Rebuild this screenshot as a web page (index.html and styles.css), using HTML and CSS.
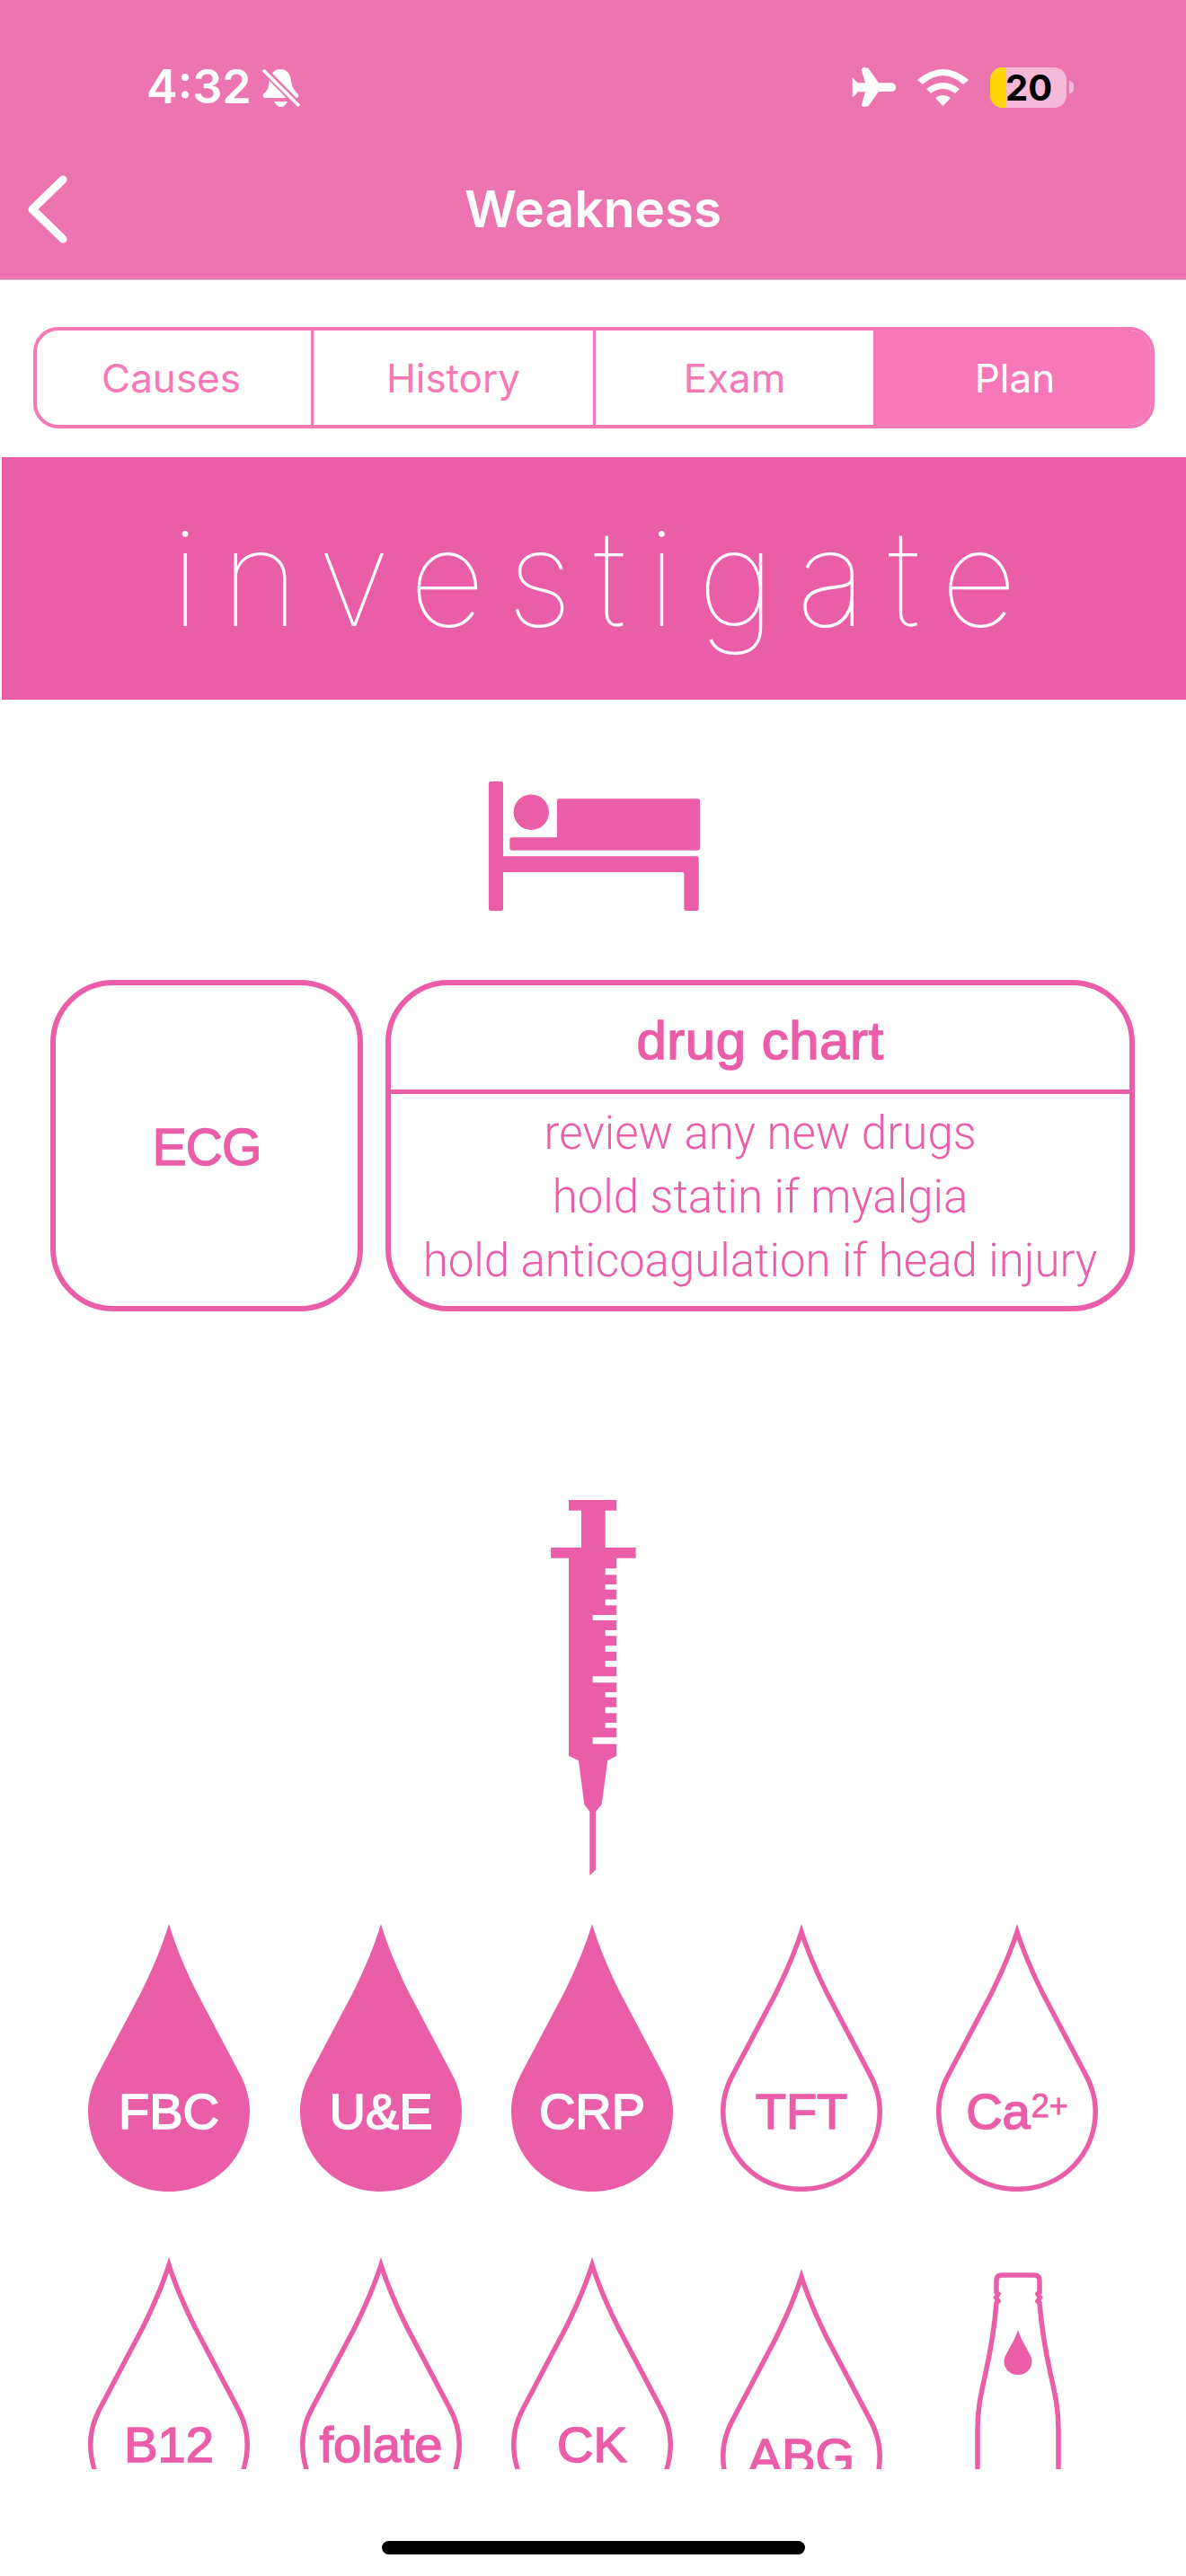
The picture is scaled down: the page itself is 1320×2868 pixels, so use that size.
FILE: index.html
```html
<!DOCTYPE html>
<html lang="en">

<head>
    <meta charset="UTF-8">
    <meta name="viewport" content="width=device-width, initial-scale=1.0">
    <title>Weakness</title>
    <link rel="stylesheet" href="styles.css">
</head>

<body>
    <svg class="defs" aria-hidden="true">
        <defs>
            <path id="dropShape" d="M90 0C82 26 72 50 58 78L11 167C5 178 0 193 0 208C0 258 38 298 90 298C142 298 180 258 180 208C180 193 175 178 169 167L122 78C108 50 98 26 90 0Z"/>
            <clipPath id="dropClip"><use href="#dropShape"/></clipPath>
        </defs>
    </svg>

    <header class="topbar">
        <div class="status">
            <div class="status-left">
                <span class="time">4:32</span>
                <svg class="bell" viewBox="0 0 42 43">
                    <path d="M20 1C27 1 31 6 32 14C33 22 36 25 40 29Q41 33 38 33H3Q0 33 1 29C5 25 7 23 7 17C8 7 13 1 20 1Z"/>
                    <path d="M13 37H28Q25 43 20.500 43Q16 43 13 37Z"/>
                    <line class="bell-gap" x1="1" y1="1" x2="41" y2="42"/>
                    <line class="bell-slash" x1="1" y1="2" x2="41" y2="42"/>
                </svg>
            </div>
            <div class="status-right">
                <svg class="plane" viewBox="0 0 49 44">
                    <path d="M.7 11.300L5 15.700L6.700 17.300H15L10.700 2.300L12.700 0L18.300 .7L30 17.300H43.300Q49 17.300 49 22Q49 27 43.300 27H30L18.300 43.300L12.700 44L10.700 42.300L15 27.300H6.700L4 30.700L.7 33.300Z"/>
                </svg>
                <svg class="wifi" viewBox="0 0 57 41">
                    <path d="M0 12Q28.500 -12 57 12L51 17Q28.500 -3 6 17Z"/>
                    <path d="M10 22Q28.500 8 47 22L42 27Q28.500 17 15 27Z"/>
                    <path d="M20 32Q28.500 26 37 32L28.500 41Z"/>
                </svg>
                <div class="battery">
                    <div class="battery-body"><span class="battery-low"></span><span class="battery-num">20</span></div>
                    <span class="battery-nub"></span>
                </div>
            </div>
        </div>
        <div class="nav">
            <svg class="back" viewBox="0 0 44 76">
                <polyline points="39,5 5,38 39,71"/>
            </svg>
            <h1 class="nav-title">Weakness</h1>
        </div>
    </header>

    <nav class="tabs">
        <div class="tab tab-first">Causes</div>
        <div class="tab">History</div>
        <div class="tab tab-third">Exam</div>
        <div class="tab tab-on">Plan</div>
    </nav>

    <div class="banner">investigate</div>

    <svg class="bed" viewBox="0 0 235 144">
        <rect x="0" y="0" width="16" height="144" rx="2.500"/>
        <path d="M16 83.300H231.500Q233.700 83.300 233.700 85.500V141.500Q233.700 144 231.500 144H219.500Q217.300 144 217.300 141.500V103Q217.300 101 215.300 101H16Z"/>
        <path d="M78 19.300H232.500Q235 19.300 235 22V74Q235 76.700 232.500 76.700H26Q23.300 76.700 23.300 74V65Q23.300 62.300 26 62.300H76V21.300Q76 19.300 78 19.300Z"/>
        <circle cx="47.300" cy="34.300" r="19.700"/>
    </svg>

    <section class="cards">
        <div class="card card-ecg">ECG</div>
        <div class="card card-drug">
            <div class="card-head">drug chart</div>
            <div class="card-body">
                <p>review any new drugs</p>
                <p>hold statin if myalgia</p>
                <p>hold anticoagulation if head injury</p>
            </div>
        </div>
    </section>

    <svg class="syringe" viewBox="0 0 94.700 418">
        <path d="M20 0H73.300V11.700H60.700V53H94.700V64.700H73.300V285L63.300 290L56.700 339L50 347V411.700L43.300 418V347L37.300 339L31 290L20 285V64.700H0V53H34V11.700H20Z"/>
        <g class="ticks">
            <rect x="60.700" y="76.300" width="13" height="7"/>
            <rect x="60.700" y="94" width="13" height="5.700"/>
            <rect x="60.700" y="110.700" width="13" height="6.600"/>
            <rect x="46.700" y="128" width="27" height="6"/>
            <rect x="60.700" y="145" width="13" height="6.300"/>
            <rect x="60.700" y="162.300" width="13" height="6.700"/>
            <rect x="60.700" y="179" width="13" height="6.700"/>
            <rect x="46.700" y="196.300" width="27" height="7"/>
            <rect x="60.700" y="214" width="13" height="5.700"/>
            <rect x="60.700" y="230.700" width="13" height="6.600"/>
            <rect x="60.700" y="248" width="13" height="5.700"/>
            <rect x="46.700" y="264.300" width="27" height="7.400"/>
        </g>
    </svg>

    <section class="bloods">
        <div class="drop drop-on">
            <svg viewBox="0 0 180 298"><use href="#dropShape"/></svg>
            <span class="drop-label">FBC</span>
        </div>
        <div class="drop drop-on">
            <svg viewBox="0 0 180 298"><use href="#dropShape"/></svg>
            <span class="drop-label">U&amp;E</span>
        </div>
        <div class="drop drop-on">
            <svg viewBox="0 0 180 298"><use href="#dropShape"/></svg>
            <span class="drop-label">CRP</span>
        </div>
        <div class="drop">
            <svg viewBox="0 0 180 298"><use href="#dropShape" clip-path="url(#dropClip)"/></svg>
            <span class="drop-label">TFT</span>
        </div>
        <div class="drop">
            <svg viewBox="0 0 180 298"><use href="#dropShape" clip-path="url(#dropClip)"/></svg>
            <span class="drop-label">Ca<sup>2+</sup></span>
        </div>
        <div class="drop">
            <svg viewBox="0 0 180 298"><use href="#dropShape" clip-path="url(#dropClip)"/></svg>
            <span class="drop-label">B12</span>
        </div>
        <div class="drop">
            <svg viewBox="0 0 180 298"><use href="#dropShape" clip-path="url(#dropClip)"/></svg>
            <span class="drop-label">folate</span>
        </div>
        <div class="drop">
            <svg viewBox="0 0 180 298"><use href="#dropShape" clip-path="url(#dropClip)"/></svg>
            <span class="drop-label">CK</span>
        </div>
        <div class="drop drop-low">
            <svg viewBox="0 0 180 298"><use href="#dropShape" clip-path="url(#dropClip)"/></svg>
            <span class="drop-label">ABG</span>
        </div>
        <svg class="bottle" viewBox="0 0 96 240">
            <path class="bottle-line" d="M3 240V175C3 150 7 135 12 112C19 80 22 60 24 34L26 32L23.500 28L26 24L24 22V9Q24 3 30 3H66Q72 3 72 9V22L70 24L72.500 28L70 32L72 34C74 60 77 80 84 112C89 135 93 150 93 175V240"/>
            <use href="#dropShape" transform="translate(32.500 64) scale(.172 .168)"/>
        </svg>
    </section>

    <div class="home-bar"></div>
</body>

</html>
```

FILE: styles.css
```css
* {
    box-sizing: border-box;
}

html,
body {
    margin: 0;
    padding: 0;
}

body {
    position: relative;
    width: 1320px;
    height: 2868px;
    overflow: hidden;
    background: #fff;
    font-family: "Liberation Sans", Arial, sans-serif;
}

.defs {
    position: absolute;
    width: 0;
    height: 0;
}

/* top bar */
.topbar {
    display: flex;
    flex-direction: column;
    height: 312px;
    padding-top: 74px;
    background: #ec74af;
    border-bottom: 1px solid #d9c3cf;
    color: #fff;
    font-family: Inter, sans-serif;
}

.status {
    display: flex;
    justify-content: space-between;
    align-items: center;
    height: 46px;
    padding: 0 125px 0 163px;
}

.status-left,
.status-right {
    display: flex;
    align-items: center;
}

.status-left {
    gap: 12px;
}

.status-right {
    gap: 24px;
}

.time {
    font-size: 52px;
    font-weight: 600;
    line-height: 46px;
}

.bell {
    width: 42px;
    height: 43px;
    fill: #fff;
}

.bell-gap {
    stroke: #ec74af;
    stroke-width: 8;
}

.bell-slash {
    stroke: #fff;
    stroke-width: 3.500;
}

.plane {
    width: 49px;
    height: 44px;
    fill: #fff;
}

.wifi {
    width: 57px;
    height: 41px;
    fill: #fff;
}

.battery {
    display: flex;
    align-items: center;
    gap: 3px;
}

.battery-body {
    display: flex;
    width: 85px;
    height: 45px;
    border-radius: 14px;
    background: #f5b9d7;
}

.battery-low {
    width: 17px;
    border-radius: 14px 0 0 14px;
    background: #ffd60a;
}

.battery-num {
    font-size: 40px;
    font-weight: 700;
    line-height: 45px;
    color: #000;
}

.battery-nub {
    width: 5px;
    height: 14px;
    border-radius: 0 5px 5px 0;
    background: #f5b9d7;
}

.nav {
    display: flex;
    align-items: center;
    height: 80px;
    margin-top: 73px;
    padding-left: 31px;
}

.back {
    width: 44px;
    height: 76px;
    fill: none;
    stroke: #fff;
    stroke-width: 9;
    stroke-linecap: round;
    stroke-linejoin: round;
}

.nav-title {
    margin: 0 auto;
    padding-right: 75px;
    font-size: 57px;
    font-weight: 600;
    line-height: 80px;
}

/* tabs */
.tabs {
    display: grid;
    grid-template-columns: 308px 314px 309px 1fr;
    width: 1248px;
    height: 113px;
    margin: 52px 0 0 37px;
    border: 4px solid #f678b6;
    border-radius: 28px;
    overflow: hidden;
    color: #f678b6;
    font-family: Inter, sans-serif;
    font-size: 44px;
}

.tab {
    display: flex;
    justify-content: center;
    align-items: center;
    border-right: 3px solid #f678b6;
}

.tab-first {
    padding-right: 6px;
}

.tab-third {
    border-right: 0;
}

.tab-on {
    padding-left: 6px;
    border-right: 0;
    background: #f678b6;
    color: #fff;
}

/* investigate banner */
.banner {
    display: flex;
    justify-content: center;
    align-items: center;
    height: 270px;
    margin: 32px 0 0 2px;
    padding: 0 0 2px 24px;
    background: #ea5ea8;
    color: #fff;
    font-family: Inter, sans-serif;
    font-size: 148px;
    font-weight: 100;
    letter-spacing: 24px;
}

.bed {
    display: block;
    width: 235px;
    height: 144px;
    margin: 91px 0 0 544px;
    fill: #ea5ea8;
}

/* cards */
.cards {
    display: flex;
    gap: 25px;
    height: 369px;
    margin: 77px 0 0 56px;
    color: #ea5ea8;
}

.card {
    border: 6px solid #ea5ea8;
    border-radius: 70px;
}

.card-ecg {
    display: flex;
    justify-content: center;
    align-items: center;
    width: 348px;
    padding-top: 3px;
    font-size: 57px;
    letter-spacing: -1px;
    -webkit-text-stroke: 1.500px currentColor;
}

.card-drug {
    display: flex;
    flex-direction: column;
    width: 834px;
}

.card-head {
    display: flex;
    justify-content: center;
    align-items: center;
    height: 121px;
    padding-top: 7px;
    border-bottom: 5px solid #ea5ea8;
    font-size: 60px;
    letter-spacing: .5px;
    -webkit-text-stroke: 1.500px currentColor;
}

.card-body {
    flex: 1;
    padding-top: 8px;
    font-family: Roboto, sans-serif;
    font-size: 51px;
    font-weight: 300;
    line-height: 71px;
    text-align: center;
}

.card-body p {
    margin: 0;
}

.syringe {
    display: block;
    width: 94.700px;
    height: 418px;
    margin: 210px 0 0 613px;
    fill: #ea5ea8;
}

.ticks {
    fill: #fff;
}

/* blood bottles */
.bloods {
    display: grid;
    grid-template-columns: 236px 235px 233px 240px 1fr;
    grid-auto-rows: 298px;
    row-gap: 73px;
    align-items: start;
    height: 607px;
    margin: 54px 0 0 98px;
    overflow: hidden;
}

.drop {
    display: grid;
    justify-items: center;
    width: 180px;
    height: 298px;
    color: #ea5ea8;
}

.drop svg {
    grid-area: 1 / 1;
    width: 180px;
    height: 298px;
    fill: none;
    stroke: #ea5ea8;
    stroke-width: 11;
}

.drop-on svg {
    fill: #ea5ea8;
    stroke: none;
}

.drop-on {
    color: #fff;
}

.drop-low {
    margin-top: 13px;
}

.drop-label {
    grid-area: 1 / 1;
    margin-top: 184px;
    font-size: 56px;
    line-height: 50px;
    -webkit-text-stroke: 1.600px currentColor;
}

.drop-label sup {
    margin-left: 1px;
    font-size: 36px;
    line-height: 0;
    vertical-align: 13px;
    -webkit-text-stroke: .8px currentColor;
}

.bottle {
    display: block;
    width: 96px;
    height: 240px;
    margin: 17px 0 0 43px;
    fill: #ea5ea8;
}

.bottle-line {
    fill: none;
    stroke: #ea5ea8;
    stroke-width: 5.500;
}

.home-bar {
    position: absolute;
    left: 425px;
    top: 2829px;
    width: 471px;
    height: 15px;
    border-radius: 8px;
    background: #000;
}
```
